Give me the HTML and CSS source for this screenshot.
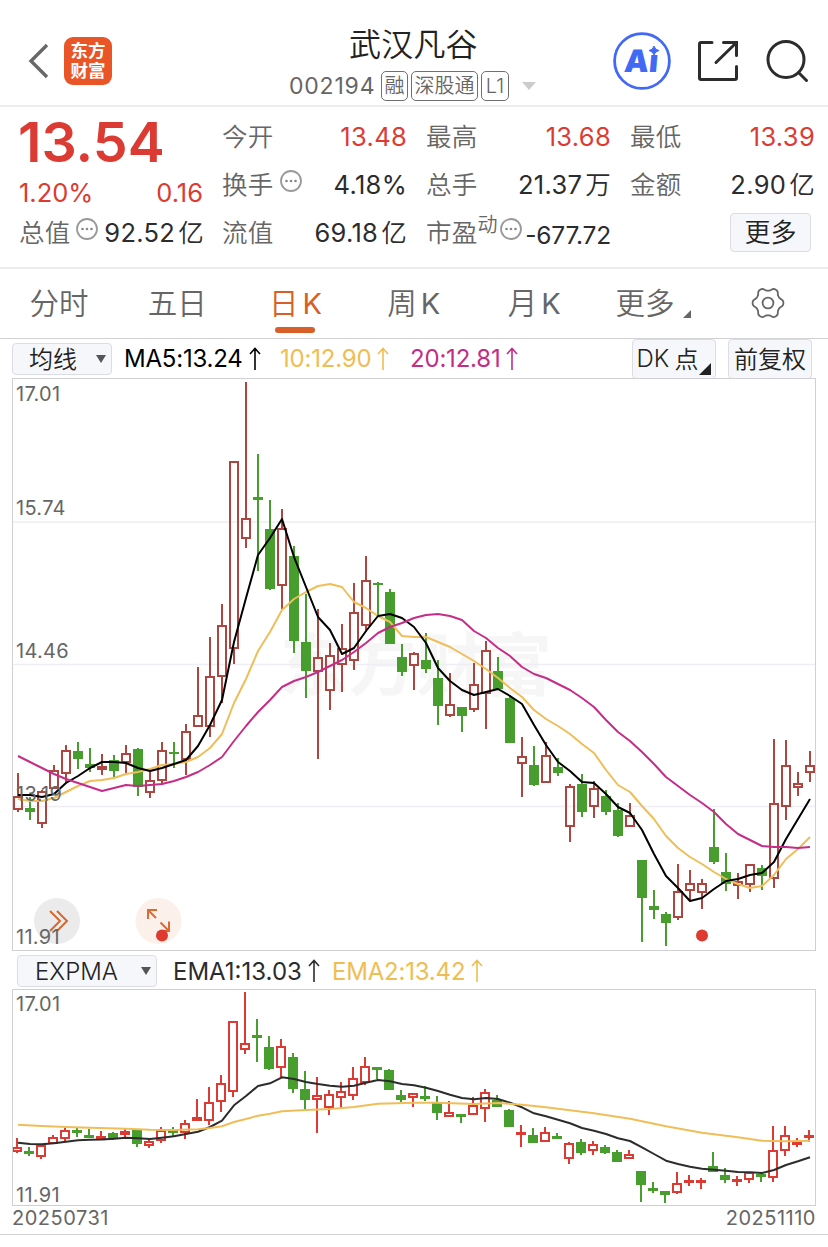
FILE: index.html
```html
<!DOCTYPE html>
<html lang="zh-CN">
<head>
    <meta charset="UTF-8">
    <meta name="viewport" content="width=device-width, initial-scale=1.0">
    <title>武汉凡谷 002194</title>
    <link rel="stylesheet" href="styles.css">
</head>
<body>
    <header class="header">
        <div class="header-left">
            <svg class="back" width="22" height="36" viewBox="0 0 22 36"><path d="M19 2 L3 18 L19 34"/></svg>
            <div class="logo"><span>东方</span><span>财富</span></div>
        </div>
        <div class="header-title">
            <h1>武汉凡谷</h1>
            <div class="code-row">
                <span class="code">002194</span>
                <span class="tag">融</span>
                <span class="tag tag-wide">深股通</span>
                <span class="tag tag-l1">L1</span>
                <span class="code-arrow"></span>
            </div>
        </div>
        <div class="header-icons">
            <svg width="58" height="58" viewBox="0 0 58 58">
                <circle cx="29" cy="29" r="27.4" fill="none" stroke="#4169f5" stroke-width="2.8"/>
                <text class="ai-text" x="11" y="40" transform="skewX(-5) translate(3 0)">Aı</text>
                <path d="M41 14 Q42 18 46 18.500 Q42 19.500 41 23 Q40 19.500 36 18.500 Q40 18 41 14Z" fill="#4169f5" stroke="#4169f5"/>
            </svg>
            <svg class="line-icon" width="42" height="42" viewBox="0 0 42 42">
                <path d="M15 2.500H4Q2.500 2.500 2.500 4V38Q2.500 39.500 4 39.500H38Q39.500 39.500 39.500 38V26.500M26.500 2.500H39.500V15.500M39 3L19 22.500"/>
            </svg>
            <svg class="line-icon" width="44" height="44" viewBox="0 0 44 44">
                <circle cx="21" cy="20.500" r="18"/>
                <path d="M33.500 33.500L41.500 41.500"/>
            </svg>
        </div>
    </header>

    <section class="quote">
        <div class="quote-main">
            <div class="price">13.54</div>
            <div class="cell change red"><span>1.20%</span><span>0.16</span></div>
            <div class="cell"><label>总值</label><svg class="tip"><use href="#tipIcon"/></svg><b>92.52<i>亿</i></b></div>
        </div>
        <div class="quote-grid">
            <div class="cell"><label>今开</label><b class="red">13.48</b></div>
            <div class="cell"><label>最高</label><b class="red">13.68</b></div>
            <div class="cell"><label>最低</label><b class="red">13.39</b></div>
            <div class="cell"><label>换手</label><svg class="tip"><use href="#tipIcon"/></svg><b>4.18%</b></div>
            <div class="cell"><label>总手</label><b>21.37<i>万</i></b></div>
            <div class="cell"><label>金额</label><b>2.90<i>亿</i></b></div>
            <div class="cell"><label>流值</label><b>69.18<i>亿</i></b></div>
            <div class="cell cell-pe"><label>市盈<sup>动</sup></label><svg class="tip"><use href="#tipIcon"/></svg><b>-677.72</b></div>
            <div class="cell"><button class="more">更多</button></div>
        </div>
    </section>

    <nav class="tabs">
        <a>分时</a>
        <a>五日</a>
        <a class="active">日<em>K</em></a>
        <a>周<em>K</em></a>
        <a class="tab-month">月<em>K</em></a>
        <a class="tab-more">更多<span class="corner"></span></a>
        <a>
            <svg class="gear" width="34" height="32" viewBox="-17 -16 34 32">
                <path id="gearPath"/>
                <circle r="5.400"/>
            </svg>
        </a>
    </nav>

    <div class="bar ma-bar">
        <button class="select select-ma"><i>均线</i><span class="down"></span></button>
        <span class="ind ma5">MA5:13.24<svg class="up"><use href="#upIcon"/></svg></span>
        <span class="ind ma10">10:12.90<svg class="up"><use href="#upIcon"/></svg></span>
        <span class="ind ma20">20:12.81<svg class="up"><use href="#upIcon"/></svg></span>
        <button class="tool tool-dk">DK<i>点</i><span class="corner"></span></button>
        <button class="tool"><i>前复权</i></button>
    </div>
    <svg class="chart" id="mainChart" width="804" height="573" viewBox="12 378 804 573">
        <text class="watermark" x="280" y="690">东方财富</text>
        <path class="grid" d="M13 522H815M13 664.500H815M13 806.500H815"/>
        <circle cx="57" cy="921" r="23" fill="#ebebeb"/>
        <path d="M50 911L60 921L50 931M57 911L67 921L57 931" fill="none" stroke="#cf6a35" stroke-width="2"/>
        <circle cx="158.500" cy="921" r="23" fill="#fcf0eb"/>
        <path d="M148 919V910H157M148 910L156 918M160.500 922.500L168.500 930.500M169 921.500V931H160" fill="none" stroke="#dd6b31" stroke-width="2"/>
        <g id="mainCandles"></g>
        <circle cx="162" cy="935.500" r="6" fill="#df3a2f"/>
        <circle cx="702" cy="935.500" r="6" fill="#df3a2f"/>
        <g class="axis">
            <text x="16" y="401">17.01</text>
            <text x="16" y="515">15.74</text>
            <text x="16" y="658">14.46</text>
            <text x="16" y="801">13.19</text>
            <text x="16" y="943.500">11.91</text>
        </g>
        <rect class="frame" x="12.500" y="378.500" width="803" height="572"/>
    </svg>

    <div class="bar ema-bar">
        <button class="select select-ema">EXPMA<span class="down"></span></button>
        <span class="ind ema1">EMA1:13.03<svg class="up"><use href="#upIcon"/></svg></span>
        <span class="ind ema2">EMA2:13.42<svg class="up"><use href="#upIcon"/></svg></span>
    </div>
    <svg class="chart" id="subChart" width="804" height="217" viewBox="12 989 804 217">
        <g id="subCandles"></g>
        <g class="axis">
            <text x="16" y="1010.500">17.01</text>
            <text x="16" y="1201.500">11.91</text>
        </g>
        <rect class="frame" x="12.500" y="989.500" width="803" height="216"/>
    </svg>
    <footer class="dates"><span>20250731</span><span>20251110</span></footer>

    <svg class="defs">
        <symbol id="tipIcon" viewBox="0 0 24 24">
            <circle cx="12" cy="12" r="10" fill="none" stroke="#999" stroke-width="1.800"/>
            <circle cx="7.500" cy="12" r="1.300" fill="#888"/>
            <circle cx="12" cy="12" r="1.300" fill="#888"/>
            <circle cx="16.500" cy="12" r="1.300" fill="#888"/>
        </symbol>
        <symbol id="upIcon" viewBox="0 0 12 24">
            <path d="M6 23V2M1 7L6 1.500L11 7" fill="none" stroke="currentColor" stroke-width="1.600"/>
        </symbol>
    </svg>
    <script src="chart.js"></script>
</body>
</html>
```
FILE: styles.css
```css
* {
    box-sizing: border-box;
}

body {
    margin: 0;
    width: 828px;
    height: 1247px;
    overflow: hidden;
    background-color: #fff;
    color: #2c2c2e;
    font-family: Inter, "Noto Sans CJK SC", sans-serif;
}

button {
    font-family: inherit;
    color: #222;
    background-color: #f6f7fa;
    border: 1px solid #dcdde3;
    border-radius: 4px;
    padding: 0;
}

i, em {
    font-style: normal;
}

.defs {
    display: none;
}

.red {
    color: #dc3b33;
}

/* 顶部 */
.header {
    display: grid;
    grid-template-columns: 200px 1fr 220px;
    height: 107px;
    border-bottom: 2px solid #ececee;
}

.header-left {
    display: flex;
    align-items: center;
    padding: 16px 0 0 28px;
}

.back {
    fill: none;
    stroke: #686868;
    stroke-width: 3.4;
    margin-right: 14px;
}

.logo {
    display: flex;
    flex-direction: column;
    align-items: center;
    width: 48px;
    height: 48px;
    padding-top: 4px;
    border-radius: 9px;
    background-color: #ea5527;
    color: #fff;
    font-size: 17.5px;
    font-weight: bold;
    line-height: 20px;
}

.header-title {
    padding: 23px 0 0 89px;
}

.header-title h1 {
    margin: 0 0 0 60px;
    font-size: 32px;
    font-weight: 350;
    line-height: 44px;
    letter-spacing: 0.2px;
    color: #222;
}

.code-row {
    display: flex;
    align-items: center;
    height: 38px;
    color: #666;
}

.code {
    width: 92px;
    font-size: 23px;
    font-weight: 380;
    letter-spacing: 0.8px;
}

.tag {
    width: 27px;
    height: 30px;
    margin-right: 3px;
    border: 1px solid #707070;
    border-radius: 5px;
    font-size: 20px;
    font-weight: 350;
    line-height: 28px;
    text-align: center;
    white-space: nowrap;
}

.tag-wide {
    width: 67px;
}

.tag-l1 {
    width: 28px;
    margin-right: 13px;
}

.code-arrow {
    border: 7px solid transparent;
    border-top: 8px solid #ccc;
    border-bottom: 0;
}

.header-icons {
    display: flex;
    align-items: center;
    padding: 16px 0 0 5px;
}

.header-icons svg + svg {
    margin-left: 26px;
}

.ai-text {
    font-size: 31px;
    font-weight: 900;
    fill: #4169f5;
}

.line-icon {
    fill: none;
    stroke: #2c2c2c;
    stroke-width: 3;
    stroke-linecap: round;
}

/* 行情 */
.quote {
    display: flex;
    gap: 20px;
    height: 162px;
    padding: 8px 0 0 19px;
    border-bottom: 2px solid #ececee;
}

.quote-main {
    width: 184px;
}

.price {
    height: 54px;
    margin-left: -1px;
    color: #dc3b33;
    font-size: 55.5px;
    font-weight: 600;
    line-height: 54px;
}

.quote-grid {
    display: grid;
    grid-template-columns: repeat(3, 184px);
    grid-template-rows: repeat(3, 48px);
    column-gap: 20px;
    margin-left: -1px;
}

.cell {
    display: flex;
    align-items: center;
    height: 48px;
    font-size: 25.500px;
    line-height: 30px;
    letter-spacing: 0.3px;
    white-space: nowrap;
}

.cell label {
    margin-top: -4px;
    color: #666;
    font-size: 25.500px;
    font-weight: 350;
}

.cell b {
    margin: -4px -1px 0 auto;
    font-weight: 380;
}

.cell i {
    margin-left: 3px;
    font-weight: 350;
}

.change {
    height: 42px;
    justify-content: space-between;
    padding-top: 5px;
    font-weight: 380;
    letter-spacing: 0;
}

.tip {
    width: 24px;
    height: 24px;
    margin: -12px 0 0 5px;
}

.quote-main .tip {
    margin-left: 4px;
}

.cell sup {
    font-size: 20px;
    line-height: 0;
    vertical-align: 10px;
}

.cell-pe .tip {
    margin-left: 1px;
}

.cell-pe b {
    margin-top: -1px;
    font-size: 24.5px;
    letter-spacing: -0.2px;
}

.more {
    width: 81px;
    height: 39px;
    margin: -5px 0 0 100px;
    font-size: 26px;
    font-weight: 350;
    line-height: 36px;
}

/* 周期切换 */
.tabs {
    display: grid;
    grid-template-columns: repeat(7, 118.2px);
    height: 70px;
    border-bottom: 1px solid #d2d2d4;
}

.tabs a {
    display: flex;
    position: relative;
    align-items: center;
    justify-content: center;
    padding-bottom: 5px;
    color: #666;
    font-size: 29.5px;
    font-weight: 350;
}

.tabs em {
    margin: 4px 0 0 4px;
    font-size: 29px;
    font-weight: 400;
}

.tabs .active {
    color: #d85f28;
}

.tabs .active::after {
    content: "";
    position: absolute;
    left: 39px;
    bottom: 5px;
    width: 40px;
    height: 6px;
    border-radius: 3px;
    background-color: #d85f28;
}

.tabs .tab-month {
    padding-left: 5px;
}

.tabs .tab-more {
    padding-left: 6px;
}

.corner {
    border-left: 8px solid transparent;
    border-bottom: 8px solid #666;
}

.tabs .corner {
    margin: 26px 0 0 8px;
}

.gear {
    margin-top: 4px;
    fill: none;
    stroke: #666;
    stroke-width: 1.8;
}

/* 指标栏 */
.bar {
    display: flex;
    align-items: center;
    padding-left: 12px;
    font-size: 24px;
}

.ma-bar {
    height: 39px;
}

.ema-bar {
    height: 38px;
    padding: 2px 0 0 17px;
}

.select {
    display: flex;
    align-items: center;
    height: 32px;
    padding: 0 5px 0 17px;
    font-size: 24px;
    font-weight: 350;
    justify-content: space-between;
}

.select-ma {
    width: 100px;
    padding-left: 16px;
    margin-right: 12px;
}

.select-ema {
    width: 140px;
    margin-right: 16px;
}

.select i, .tool i {
    margin-top: -3px;
}

.down {
    border: 5px solid transparent;
    border-top: 8px solid #555;
    border-bottom: 0;
}

.ind {
    display: flex;
    align-items: center;
    font-weight: 380;
    letter-spacing: -0.2px;
    white-space: nowrap;
}

.up {
    width: 12px;
    height: 24px;
    margin-left: 6px;
}

.ma5 {
    width: 156px;
    color: #000;
}

.ma10 {
    width: 130px;
    color: #efbd52;
}

.ma20 {
    width: 222px;
    color: #c32d85;
}

.ema1 {
    width: 159px;
    letter-spacing: 0;
}

.ema2 {
    color: #efbd52;
}

.tool {
    display: flex;
    align-items: center;
    justify-content: center;
    width: 84px;
    height: 40px;
    font-size: 24px;
    font-weight: 350;
}

.tool-dk {
    margin-right: 12px;
}

.tool-dk i {
    margin-left: 5px;
}

.tool .corner {
    margin: 20px 0 0 1px;
    border-left-width: 12px;
    border-bottom: 12px solid #222;
}

/* 图表 */
.chart {
    display: block;
    margin-left: 12px;
}

.frame {
    fill: none;
    stroke: #d0d0d2;
}

.grid {
    stroke: #eeeef4;
    stroke-width: 1.5;
}

.watermark {
    font-size: 68px;
    font-weight: bold;
    fill: #f6f6f7;
}

.axis text {
    font-size: 20px;
    font-weight: 380;
    letter-spacing: 0.3px;
    fill: #666;
}

.line {
    fill: none;
    stroke-width: 2;
    stroke-linejoin: round;
}

.dates {
    display: flex;
    justify-content: space-between;
    height: 29px;
    padding: 0 12px;
    border-bottom: 1px solid #d2d2d4;
    color: #666;
    font-size: 20px;
    font-weight: 380;
    line-height: 25px;
    letter-spacing: 0.5px;
}
```
FILE: chart.js
```js
// 最高, 实体上沿, 实体下沿, 最低, 涨(1)/跌(0)
const candles = [
    [773,796,810,812,1],[797,808,812,820,0],[790,791,824,828,1],[765,770,789,789,1],
    [745,750,774,783,1],[742,751,759,769,0],[748,764,768,772,0],[754,766,770,775,1],
    [755,760,771,777,0],[745,753,763,773,1],[748,749,787,796,0],[772,780,793,798,1],
    [742,750,781,785,1],[742,752,754,768,0],[724,731,760,775,1],[667,715,727,727,1],
    [637,676,727,737,1],[604,625,677,703,1],[461,461,649,664,1],[382,518,539,548,1],
    [454,497,500,571,0],[500,529,589,590,0],[509,528,586,609,1],[546,556,641,653,0],
    [594,642,671,698,0],[609,657,672,759,1],[643,655,691,710,1],[624,648,665,692,1],
    [583,612,661,670,1],[556,580,626,632,1],[582,583,585,615,0],[589,592,644,644,0],
    [644,657,672,676,0],[652,653,666,690,1],[633,660,669,673,0],[660,678,706,725,0],
    [673,704,716,717,1],[707,707,716,732,0],[663,684,710,712,1],[641,650,694,729,1],
    [657,671,689,689,0],[695,698,743,743,0],[737,756,764,797,1],[746,765,785,786,0],
    [742,755,783,783,1],[758,767,773,776,0],[784,786,827,842,1],[774,784,812,817,0],
    [781,788,807,818,1],[790,796,812,815,0],[803,810,836,837,0],[803,815,827,827,1],
    [860,860,898,942,0],[890,906,910,919,0],[912,914,923,946,0],[864,891,918,920,1],
    [870,883,891,900,1],[879,883,893,909,1],[809,847,862,864,0],[853,872,884,891,0],
    [873,881,886,899,1],[864,864,885,892,1],[865,868,876,890,0],[739,803,879,888,1],
    [740,765,807,820,1],[772,783,788,796,1],[751,765,773,782,1]
];
const ma5 = [795,795,797,794,783,776,768,762,762,763,768,771,768,764,760,746,725,700,642,598,555,538,519,557,587,617,630,654,648,631,616,614,618,627,643,668,681,690,695,692,689,696,704,725,745,762,771,782,783,794,807,813,830,854,876,888,901,898,889,881,879,875,873,862,839,819,799];
const ma10 = [799,801,801,798,792,786,781,780,778,774,772,769,765,764,762,757,748,734,703,679,651,632,610,599,592,586,584,587,602,608,616,622,636,637,637,642,647,654,661,669,678,688,697,710,719,726,734,744,753,770,785,792,806,819,836,848,857,864,872,879,884,888,886,875,859,849,837];
const ma20 = [756,762,768,774,779,783,787,791,788,785,786,785,784,781,777,772,765,757,741,726,712,700,687,681,677,672,666,660,652,643,633,627,623,618,615,614,616,620,631,638,648,656,667,674,678,684,690,698,707,720,732,741,752,764,777,786,795,803,812,824,834,840,846,847,847,848,847];
const ema1 = [1142.7,1144,1144.3,1143.3,1141.7,1140.3,1139.8,1139.5,1138.7,1137.7,1138.3,1139,1137.7,1136.3,1134,1131.7,1127,1120.7,1105.3,1096,1086,1083.3,1077.3,1079,1082,1084,1085.7,1086.7,1085.7,1082.7,1080,1081.3,1084,1085.3,1087.7,1091,1094.7,1098,1099.3,1098,1099,1102.7,1107.3,1113.3,1116.3,1119.7,1123.3,1128,1130.7,1134,1138.3,1141,1147.3,1154,1160.7,1164,1166.7,1168.7,1169.7,1170.7,1172,1172.3,1173,1170,1165,1161.3,1157.3];
// 慢线只记录转折点: [序号, y]
const ema2 = [[0,1124.7],[2,1126],[4,1127],[6,1127.7],[9,1128.7],[11,1129.7],[13,1130],[15,1129.3],[16,1128],[17,1126.3],[18,1122],[19,1119],[20,1115.7],[21,1113.7],[22,1111.3],[24,1110],[26,1109],[28,1107],[30,1103.7],[33,1102.7],[35,1102.7],[38,1104],[40,1103],[42,1104.7],[44,1107.3],[48,1113.3],[51,1118.7],[54,1126.3],[57,1132.7],[60,1137.3],[62,1140.7],[64,1141.3],[66,1140.7]];

const x = i => 18 + i * 12;

function drawCandles(cx, y, up, down, minBody) {
    return candles.map((c, i) => {
        const [high, top, bottom, low] = c.slice(0, 4).map(y);
        const color = c[4] ? up : down;
        const cxi = cx(i);
        const h = Math.max(bottom - top, minBody);
        let s = `<path d="M${cxi} ${high}V${top}M${cxi} ${top + h}V${Math.max(low, top + h)}" stroke="${color}" stroke-width="2"/>`;
        if (c[4] && h > 4) {
            s += `<rect x="${cxi - 4}" y="${top + 1}" width="8" height="${h - 2}" fill="none" stroke="${color}" stroke-width="2"/>`;
        } else {
            s += `<rect x="${cxi - 5}" y="${top}" width="10" height="${h}" fill="${color}"/>`;
        }
        return s;
    }).join('');
}

function drawLine(points, color) {
    const list = points.map((p, i) => Array.isArray(p) ? `${x(p[0])},${p[1]}` : `${x(i)},${p}`);
    return `<polyline class="line" points="${list.join(' ')}" stroke="${color}"/>`;
}

document.getElementById('mainCandles').innerHTML =
    drawCandles(x, v => v, '#ad4641', '#479d2d', 2) +
    drawLine(ma10, '#f0be58') + drawLine(ma5, '#000') + drawLine(ma20, '#c52e88');

document.getElementById('subCandles').innerHTML =
    drawCandles(i => x(i) - 1, v => Math.round(991.5 + (v - 382) * 0.3755), '#dc3b33', '#479d2d', 3) +
    drawLine(ema1, '#2c2c2c') + drawLine(ema2, '#f0be58');

// 设置图标的齿轮轮廓
let gear = '';
for (let a = 0; a < 360; a += 4) {
    const t = a * Math.PI / 180;
    const r = 13.9 + 1.5 * Math.tanh(1.3 * Math.cos(6 * t)) / 0.862;
    gear += `${a ? 'L' : 'M'}${(r * Math.cos(t)).toFixed(2)} ${(r * Math.sin(t)).toFixed(2)}`;
}
document.getElementById('gearPath').setAttribute('d', gear + 'Z');
```
